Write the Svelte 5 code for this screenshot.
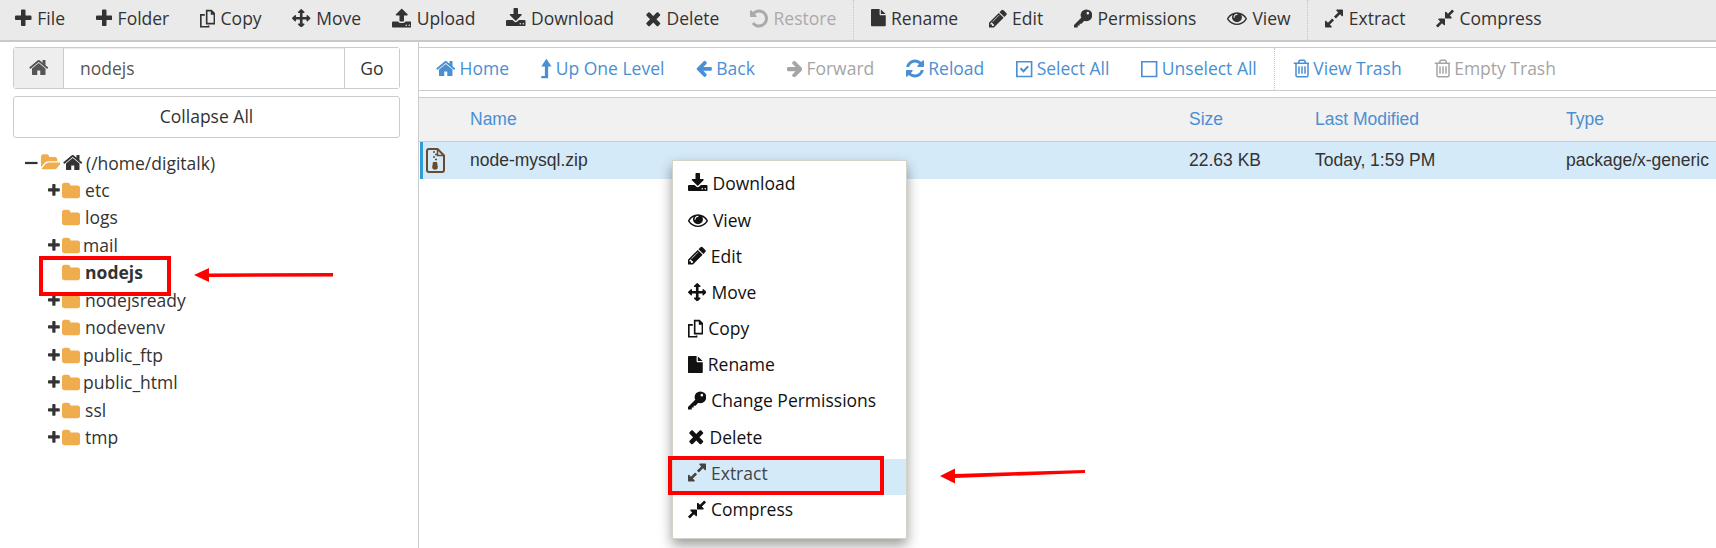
<script>
  const icons = {
    plus: { x: 192, w: 1408, d: 'M1600 736v192q0 40-28 68t-68 28h-416v416q0 40-28 68t-68 28h-192q-40 0-68-28t-28-68v-416h-416q-40 0-68-28t-28-68v-192q0-40 28-68t68-28h416v-416q0-40 28-68t68-28h192q40 0 68 28t28 68v416h416q40 0 68 28t28 68z' },
    minus: { x: 192, w: 1408, d: 'M192 770h1408v250H192z' },
    home: { x: 64, w: 1664, d: 'M1472 992v480q0 26-19 45t-45 19h-384v-384h-256v384h-384q-26 0-45-19t-19-45v-480q0-1 .5-3t.5-3l575-474 575 474q1 2 1 6zm223-69l-62 74q-8 9-21 11h-3q-13 0-21-7l-692-577-692 577q-12 8-24 7-13-2-21-11l-62-74q-8-10-7-23.5t11-21.5l719-599q32-26 76-26t76 26l244 204v-195q0-14 9-23t23-9h192q14 0 23 9t9 23v408l219 182q10 8 11 21.5t-7 23.5z' },
    folder: { x: -64, w: 1664, d: 'M1600 648v704q0 92-66 158t-158 66h-1216q-92 0-158-66t-66-158v-960q0-92 66-158t158-66h320q92 0 158 66t66 158v32h672q92 0 158 66t66 158z' },
    folderOpen: { x: 0, w: 1880, d: 'M1879 952q0 31-31 66l-336 396q-43 51-120.5 86.5t-143.5 35.5h-1088q-34 0-60.5-13t-26.5-43q0-31 31-66l336-396q43-51 120.5-86.5t143.5-35.5h1088q34 0 60.5 13t26.5 43zm-343-344v160h-832q-94 0-197 47.5t-164 119.5l-337 396-5 6q0-4-.5-12.5t-.5-12.5v-960q0-92 66-158t158-66h320q92 0 158 66t66 158v32h544q92 0 158 66t66 158z' },
    times: { x: 192, w: 1408, d: 'M1490 1322q0 40-28 68l-136 136q-28 28-68 28t-68-28l-294-294-294 294q-28 28-68 28t-68-28l-136-136q-28-28-28-68t28-68l294-294-294-294q-28-28-28-68t28-68l136-136q28-28 68-28t68 28l294 294 294-294q28-28 68-28t68 28l136 136q28 28 28 68t-28 68l-294 294 294 294q28 28 28 68z' },
    file: { x: 128, w: 1536, size: 0.82, d: 'M1152 512v-472q22 14 36 28l408 408q14 14 28 36h-472zm-128 32q0 40 28 68t68 28h544v1056q0 40-28 68t-68 28h-1344q-40 0-68-28t-28-68v-1600q0-40 28-68t68-28h800v544z' },
    pencil: { x: 128, w: 1520, d: 'M491 1536l91-91-235-235-91 91v107h128v128h107zm523-928q0-22-22-22-10 0-17 7l-542 542q-7 7-7 17 0 22 22 22 10 0 17-7l542-542q7-7 7-17zm-54-192l416 416-832 832h-416v-416zm683 96q0 53-37 90l-166 166-416-416 166-165q36-38 90-38 53 0 91 38l235 234q37 39 37 91z' },
    key: { x: 120, w: 1560, d: 'M1180 120a500 500 0 1 1 0 1000a500 500 0 1 1 0-1000z M1300 330a110 110 0 1 0 0 220a110 110 0 1 0 0-220z M780 780L1000 1080L760 1340H600V1500H440V1660H120V1440Z' },
    eye: { x: 0, w: 1792, size: 0.95, d: 'M1664 960q-152-236-381-353 61 104 61 225 0 185-131.5 316.5t-316.5 131.5-316.5-131.5-131.5-316.5q0-121 61-225-229 117-381 353 133 205 333.5 326.5t434.5 121.5 434.5-121.5 333.5-326.5zm-720-384q0-20-14-34t-34-14q-125 0-214.5 89.5t-89.5 214.5q0 20 14 34t34 14 34-14 14-34q0-86 61-147t147-61q20 0 34-14t14-34zm848 384q0 34-20 69-140 230-376.5 368.5t-499.5 138.5-499.5-139-376.5-368q-20-35-20-69t20-69q140-229 376.5-368t499.5-139 499.5 139 376.5 368q20 35 20 69z' },
    move: { x: 0, w: 1792, size: 0.88, d: 'M1792 896q0 26-19 45l-256 256q-19 19-45 19t-45-19-19-45v-128h-384v384h128q26 0 45 19t19 45-19 45l-256 256q-19 19-45 19t-45-19l-256-256q-19-19-19-45t19-45 45-19h128v-384h-384v128q0 26-19 45t-45 19-45-19l-256-256q-19-19-19-45t19-45l256-256q19-19 45-19t45 19 19 45v128h384v-384h-128q-26 0-45-19t-19-45 19-45l256-256q19-19 45-19t45 19l256 256q19 19 19 45t-19 45-45 19h-128v384h384v-128q0-26 19-45t45-19 45 19l256 256q19 19 19 45z' },
    expand: { x: 128, w: 1536, d: 'M883 1056q0 13-10 23l-332 332 144 144q19 19 19 45t-19 45-45 19h-448q-26 0-45-19t-19-45v-448q0-26 19-45t45-19 45 19l144 144 332-332q10-10 23-10t23 10l114 114q10 10 10 23zm781-864v448q0 26-19 45t-45 19-45-19l-144-144-332 332q-10 10-23 10t-23-10l-114-114q-10-10-10-23t10-23l332-332-144-144q-19-19-19-45t19-45 45-19h448q26 0 45 19t19 45z' },
    compress: { x: 128, w: 1536, d: 'M896 960v448q0 26-19 45t-45 19-45-19l-144-144-332 332q-10 10-23 10t-23-10l-114-114q-10-10-10-23t10-23l332-332-144-144q-19-19-19-45t19-45 45-19h448q26 0 45 19t19 45zm755-672q0 13-10 23l-332 332 144 144q19 19 19 45t-19 45-45 19h-448q-26 0-45-19t-19-45v-448q0-26 19-45t45-19 45 19l144 144 332-332q10-10 23-10t23 10l114 114q10 10 10 23z' },
    trash: { x: 128, w: 1408, d: 'M704 736v576q0 14-9 23t-23 9h-64q-14 0-23-9t-9-23v-576q0-14 9-23t23-9h64q14 0 23 9t9 23zm256 0v576q0 14-9 23t-23 9h-64q-14 0-23-9t-9-23v-576q0-14 9-23t23-9h64q14 0 23 9t9 23zm256 0v576q0 14-9 23t-23 9h-64q-14 0-23-9t-9-23v-576q0-14 9-23t23-9h64q14 0 23 9t9 23zm128 724v-948h-896v948q0 22 7 40.5t14.5 27 10.5 8.5h832q3 0 10.5-8.5t14.5-27 7-40.5zm-672-1076h448l-48-117q-7-9-17-11h-317q-10 2-17 11zm928 32v64q0 14-9 23t-23 9h-96v948q0 83-47 143.5t-113 60.5h-832q-66 0-113-58.5t-47-141.5v-952h-96q-14 0-23-9t-9-23v-64q0-14 9-23t23-9h309l70-167q15-37 54-63t79-26h320q40 0 79 26t54 63l70 167h309q14 0 23 9t9 23z' },
    refresh: { x: 128, w: 1536, d: 'M1639 1056q0 5-1 7-64 268-268 434.5t-478 166.5q-146 0-282.5-55t-243.5-157l-129 129q-19 19-45 19t-45-19-19-45v-448q0-26 19-45t45-19h448q26 0 45 19t19 45-19 45l-137 137q71 66 161 102t187 36q134 0 250-65t186-179q11-17 53-117 8-23 30-23h192q13 0 22.5 9.5t9.5 22.5zm25-800v448q0 26-19 45t-45 19h-448q-26 0-45-19t-19-45 19-45l138-138q-148-137-349-137-134 0-250 65t-186 179q-11 17-53 117-8 23-30 23h-199q-13 0-22.5-9.5t-9.5-22.5v-7q65-268 270-434.5t480-166.5q146 0 284 55.5t245 156.5l130-129q19-19 45-19t45 19 19 45z' },
    undo: { x: 128, w: 1536, d: 'M1664 896q0 156-61 298t-164 245-245 164-298 61q-172 0-327-72.5t-264-204.5q-7-10-6.5-22.5t8.5-20.5l137-138q10-9 25-9 16 2 23 12 73 95 179 147t225 52q104 0 198.5-40.5t163.5-109.5 109.5-163.5 40.5-198.5-40.5-198.5-109.5-163.5-163.5-109.5-198.5-40.5q-98 0-188 35.5t-160 101.5l137 138q31 30 14 69-17 40-59 40h-448q-26 0-45-19t-19-45v-448q0-42 40-59 39-17 69 14l130 129q107-101 244.5-156.5t284.5-55.5q156 0 298 61t245 164 164 245 61 298z' },
    left: { x: 128, w: 1536, size: 0.88, d: 'M1664 896v128q0 53-32.5 90.5t-84.5 37.5h-704l293 294q38 36 38 90t-38 90l-75 76q-37 37-90 37-52 0-91-37l-651-652q-37-37-37-90 0-52 37-91l651-650q38-38 91-38 52 0 90 38l75 74q38 38 38 91t-38 91l-293 293h704q52 0 84.5 37.5t32.5 90.5z' },
    right: { x: 128, w: 1472, size: 0.9, d: 'M1600 960q0 54-37 91l-651 651q-39 37-91 37-51 0-90-37l-75-75q-38-38-38-91t38-91l293-293h-704q-52 0-84.5-37.5t-32.5-90.5v-128q0-53 32.5-90.5t84.5-37.5h704l-293-294q-38-36-38-90t38-90l75-75q38-38 90-38 53 0 91 38l651 651q37 35 37 90z' },
    up: { x: 440, w: 920, d: 'M896 60L1340 720H1050V1720H460V1530H770V720H460z' },
    upload: { x: 64, w: 1664, d: 'M1344 1472q0-26-19-45t-45-19-45 19-19 45 19 45 45 19 45-19 19-45zm256 0q0-26-19-45t-45-19-45 19-19 45 19 45 45 19 45-19 19-45zm128-224v320q0 40-28 68t-68 28h-1472q-40 0-68-28t-28-68v-320q0-40 28-68t68-28h427q21 56 70.5 92t110.5 36h256q61 0 110.5-36t70.5-92h427q40 0 68 28t28 68zm-325-648q-17 40-59 40h-256v448q0 26-19 45t-45 19h-256q-26 0-45-19t-19-45v-448h-256q-42 0-59-40-17-39 14-69l448-448q18-19 45-19t45 19l448 448q31 30 14 69z' },
    download: { x: 64, w: 1664, d: 'M1344 1344q0-26-19-45t-45-19-45 19-19 45 19 45 45 19 45-19 19-45zm256 0q0-26-19-45t-45-19-45 19-19 45 19 45 45 19 45-19 19-45zm128-224v320q0 40-28 68t-68 28h-1472q-40 0-68-28t-28-68v-320q0-40 28-68t68-28h465l135 136q58 56 136 56t136-56l136-136h464q40 0 68 28t28 68zm-325-569q17 41-14 70l-448 448q-18 19-45 19t-45-19l-448-448q-31-29-14-70 17-39 59-39h256v-448q0-26 19-45t45-19h256q26 0 45 19t19 45v448h256q42 0 59 39z' },
    copy: { x: 100, w: 1300, odd: true, d: 'M600 150h500l300 300v950h-800z M740 290v970h520V570h-240V290z M510 520H100v1150h800v-170H760v30H240V660h270z' },
    check: { x: 200, w: 1400, odd: true, d: 'M200 250h1400v1400H200z M340 390v1120h1120V390z M520 930l120-120 200 200 340-370 120 120-460 500z' },
    square: { x: 200, w: 1400, odd: true, d: 'M200 250h1400v1400H200z M340 390v1120h1120V390z' }
  };

  const tools = [
    { icon: 'plus', label: 'File' },
    { icon: 'plus', label: 'Folder' },
    { icon: 'copy', label: 'Copy' },
    { icon: 'move', label: 'Move' },
    { icon: 'upload', label: 'Upload' },
    { icon: 'download', label: 'Download' },
    { icon: 'times', label: 'Delete' },
    { icon: 'undo', label: 'Restore', off: true, sep: true },
    { icon: 'file', label: 'Rename' },
    { icon: 'pencil', label: 'Edit' },
    { icon: 'key', label: 'Permissions' },
    { icon: 'eye', label: 'View', sep: true },
    { icon: 'expand', label: 'Extract' },
    { icon: 'compress', label: 'Compress' }
  ];

  const navs = [
    { icon: 'home', label: 'Home' },
    { icon: 'up', label: 'Up One Level' },
    { icon: 'left', label: 'Back' },
    { icon: 'right', label: 'Forward', off: true },
    { icon: 'refresh', label: 'Reload' },
    { icon: 'check', label: 'Select All' },
    { icon: 'square', label: 'Unselect All', sep: true },
    { icon: 'trash', label: 'View Trash' },
    { icon: 'trash', label: 'Empty Trash', off: true }
  ];

  const tree = [
    { name: 'etc', plus: true },
    { name: 'logs' },
    { name: 'mail', plus: true, tight: true },
    { name: 'nodejs', bold: true },
    { name: 'nodejsready', plus: true },
    { name: 'nodevenv', plus: true },
    { name: 'public_ftp', plus: true, tight: true },
    { name: 'public_html', plus: true, tight: true },
    { name: 'ssl', plus: true },
    { name: 'tmp', plus: true }
  ];

  const menu = [
    { icon: 'download', label: 'Download' },
    { icon: 'eye', label: 'View' },
    { icon: 'pencil', label: 'Edit' },
    { icon: 'move', label: 'Move' },
    { icon: 'copy', label: 'Copy' },
    { icon: 'file', label: 'Rename' },
    { icon: 'key', label: 'Change Permissions' },
    { icon: 'times', label: 'Delete' },
    { icon: 'expand', label: 'Extract', hover: true },
    { icon: 'compress', label: 'Compress' }
  ];
</script>

{#snippet ico(name, size = 21)}
  {@const i = icons[name]}
  {@const s = size * (i.size ?? 1)}
  <svg class="ico" width={i.w * s / 1792} height={s} viewBox="{i.x} 0 {i.w} 1792" fill="currentColor" fill-rule={i.odd ? 'evenodd' : 'nonzero'}><path d={i.d} /></svg>
{/snippet}

<div class="page">
  <div class="toolbar">
    {#each tools as t}
      <span class="tool" class:off={t.off}>{@render ico(t.icon)}{t.label}</span>
      {#if t.sep}<span class="sep"></span>{/if}
    {/each}
  </div>

  <div class="main">
    <aside class="side">
      <div class="search">
        <span class="addon">{@render ico('home')}</span>
        <span class="path">nodejs</span>
        <span class="go">Go</span>
      </div>
      <div class="collapse">Collapse All</div>
      <div class="tree">
        <div class="root">
          <span class="toggle">{@render ico('minus', 16)}</span>
          <span class="open">{@render ico('folderOpen', 19)}</span>
          {@render ico('home')}
          <span class="root-label">(/home/digitalk)</span>
        </div>
        {#each tree as n}
          <div class="node" class:tight={n.tight} class:bold={n.bold}>
            <span class="plus">{#if n.plus}{@render ico('plus', 15)}{/if}</span>
            <span class="folder">{@render ico('folder', 19.5)}</span>
            <span>{n.name}</span>
          </div>
        {/each}
      </div>
    </aside>

    <section class="content">
      <div class="nav">
        {#each navs as n}
          <span class="nav-btn" class:off={n.off}>{@render ico(n.icon)}{n.label}</span>
          {#if n.sep}<span class="sep"></span>{/if}
        {/each}
      </div>
      <div class="grid head">
        <span></span><span>Name</span><span>Size</span><span>Last Modified</span><span>Type</span>
      </div>
      <div class="grid row">
        <span class="zip">
          <svg width="19" height="25" viewBox="0 0 19 25" fill="none" stroke="#6b4a2b" stroke-width="2">
            <path d="M3 1H11.5L18 7.5V22Q18 24 16 24H3Q1 24 1 22V3Q1 1 3 1Z" />
            <path d="M11.5 1.5V7.5H17.5" stroke-width="1.5" />
            <path d="M7 4h2M9 6.5h2M7 9h2M9 11.5h2" stroke-width="1.5" />
            <path d="M7 14h4l.8 5a2.8 2.8 0 0 1-5.6 0z" fill="#6b4a2b" stroke="none" />
          </svg>
        </span>
        <span>node-mysql.zip</span><span>22.63 KB</span><span>Today, 1:59 PM</span><span>package/x-generic</span>
      </div>
    </section>
  </div>

  <ul class="menu">
    {#each menu as m}
      <li class:hover={m.hover}>{@render ico(m.icon)}<span>{m.label}</span></li>
    {/each}
  </ul>

  <div class="mark mark-tree"></div>
  <div class="mark mark-menu"></div>
  <svg class="arrows" width="1716" height="548" fill="#f00" stroke="none">
    <path d="M194 275L209 268V273.5L333 273V276.5L209 277V282Z" />
    <path d="M940 476L955 468.5V474L1085 470V473L955 478V483.5Z" />
  </svg>
</div>

<style>
  :global(body) {
    margin: 0;
    background: #fff;
  }

  .page {
    position: relative;
    width: 1716px;
    height: 548px;
    overflow: hidden;
    font-family: "Open Sans", sans-serif;
    font-size: 17.5px;
    color: #333;
  }

  .ico {
    flex-shrink: 0;
  }

  .toolbar {
    display: flex;
    align-items: stretch;
    height: 40px;
    background: #eaeaea;
    border-bottom: 2px solid #c9c9c9;
  }

  .tool {
    display: flex;
    align-items: center;
    gap: 5.5px;
    padding: 0 15.3px 4px;
  }

  .off {
    color: #aaa;
  }

  .sep {
    width: 0;
    border-left: 1px dotted #c4c4c4;
    margin: 0 1.5px;
  }

  .main {
    display: flex;
    height: 506px;
  }

  .side {
    width: 419px;
    box-sizing: border-box;
    border-right: 1px solid #ccc;
    padding: 5px 18px 0 13px;
    flex-shrink: 0;
  }

  .search {
    display: flex;
    height: 42px;
    border: 1px solid #ccc;
    border-radius: 3px;
    box-sizing: border-box;
    align-items: stretch;
    box-shadow: inset 0 1px 1px rgba(0, 0, 0, 0.08);
  }

  .addon {
    width: 50px;
    background: #eee;
    border-right: 1px solid #ccc;
    display: flex;
    align-items: center;
    justify-content: center;
    color: #555;
    padding-bottom: 2px;
    box-sizing: border-box;
  }

  .path {
    flex: 1;
    display: flex;
    align-items: center;
    padding-left: 16px;
    padding-bottom: 1px;
    color: #555;
  }

  .go {
    width: 54px;
    display: flex;
    align-items: center;
    justify-content: center;
    border-left: 1px solid #ccc;
    background: #fff;
    padding-bottom: 1px;
  }

  .collapse {
    margin-top: 7px;
    height: 42px;
    box-sizing: border-box;
    border: 1px solid #ccc;
    border-radius: 3px;
    display: flex;
    align-items: center;
    justify-content: center;
    padding-bottom: 2px;
  }

  .tree {
    margin-top: 11px;
    line-height: 27.5px;
  }

  .root,
  .node {
    display: flex;
    align-items: center;
    height: 27.5px;
  }

  .root {
    padding-left: 12px;
  }

  .open {
    display: flex;
    color: #f0ad4e;
    margin: 0 3px 0 3px;
  }

  .root-label {
    margin-left: 3px;
    padding-top: 1px;
  }

  .toggle,
  .plus,
  .folder {
    display: flex;
    align-items: center;
  }

  .folder {
    color: #f0ad4e;
    margin-right: 5px;
  }

  .node {
    padding-left: 35px;
  }

  .plus {
    width: 14px;
  }

  .tight .folder {
    margin-right: 3px;
  }

  .bold {
    font-weight: 700;
  }

  .content {
    flex: 1;
    min-width: 0;
    padding-top: 5px;
  }

  .nav {
    display: flex;
    height: 44px;
    box-sizing: border-box;
    border-top: 1px solid #ccc;
    border-bottom: 1px solid #ccc;
    padding-left: 1px;
    color: #4a8fd3;
  }

  .nav-btn {
    display: flex;
    align-items: center;
    gap: 4px;
    padding: 0 16px 2px;
  }

  .nav-btn.off {
    color: #a5a5a5;
  }

  .grid {
    display: grid;
    grid-template-columns: 51px 719px 126px 251px 1fr;
    align-items: center;
    font-family: "Liberation Sans", Arial, sans-serif;
    font-size: 17.5px;
  }

  .head {
    margin-top: 6px;
    height: 45px;
    box-sizing: border-box;
    background: #f1f1f1;
    border-top: 1px solid #ccc;
    border-bottom: 1px solid #ccc;
    color: #4a8fd3;
  }

  .row {
    height: 37px;
    background: #d5eaf8;
    border-left: 3px solid #2f9bd7;
    margin-left: 1px;
    box-sizing: border-box;
    grid-template-columns: 47px 719px 126px 251px 1fr;
  }

  .zip {
    display: flex;
    padding-left: 3px;
  }

  .menu {
    position: absolute;
    left: 672px;
    top: 160px;
    width: 235px;
    height: 379px;
    box-sizing: border-box;
    margin: 0;
    padding: 8px 0 0;
    list-style: none;
    background: #fff;
    border: 1px solid #d3d3c8;
    box-shadow: 0 6px 12px rgba(0, 0, 0, 0.4);
    color: #111;
  }

  .menu li {
    display: flex;
    align-items: center;
    gap: 5px;
    height: 36.2px;
    box-sizing: border-box;
    padding: 0 0 7.5px 15px;
  }

  .menu li.hover {
    background: #d5eaf8;
    color: #444;
  }

  .mark {
    position: absolute;
    box-sizing: border-box;
    border: 4px solid #f00;
  }

  .mark-tree {
    left: 39px;
    top: 256px;
    width: 132px;
    height: 40px;
  }

  .mark-menu {
    left: 668px;
    top: 456px;
    width: 216px;
    height: 39px;
  }

  .arrows {
    position: absolute;
    left: 0;
    top: 0;
    pointer-events: none;
  }
</style>
